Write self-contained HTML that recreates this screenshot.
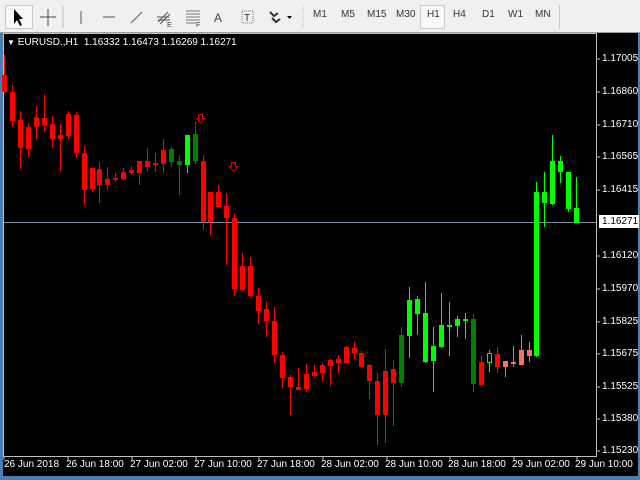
<!DOCTYPE html>
<html><head><meta charset="utf-8"><style>
body{margin:0;width:640px;height:480px;overflow:hidden;background:#000;font-family:"Liberation Sans",sans-serif;position:relative}
#tb{position:absolute;left:0;top:0;width:640px;height:33px;background:#f0f0f0;border-bottom:1px solid #a0a0a0;box-sizing:border-box}
.tf{position:absolute;top:9px;font-size:10px;color:#333}
.btn{position:absolute;top:5px;height:24px;border:1px solid #c8c8c8;box-sizing:border-box;background:#f8f8f8}
#lb{position:absolute;left:0;top:33px;width:3px;height:447px;background:#4a7fb0}
#bb{position:absolute;left:0;top:476px;width:640px;height:4px;background:#4a7fb0}
#rb{position:absolute;left:638px;top:33px;width:2px;height:447px;background:#4a7fb0}
.pl{position:absolute;left:602px;font-size:10px;color:#fff}
.dl{position:absolute;top:459px;font-size:10px;color:#fff;white-space:nowrap}
</style></head><body>
<div id="tb">
<div class="btn" style="left:5px;width:28px"></div>
<svg style="position:absolute;left:0;top:0" width="310" height="33">
<path d="M14 9 L14 24 L17 20 L20 26 L22 25 L19 19 L23 19 Z" fill="#000"/>
<path d="M48 9V26M40 17H56" stroke="#444" stroke-width="1"/>
<line x1="63" y1="6" x2="63" y2="28" stroke="#bbb"/>
<line x1="81" y1="11" x2="81" y2="24" stroke="#555"/>
<line x1="103" y1="17" x2="115" y2="17" stroke="#555"/>
<line x1="131" y1="23" x2="142" y2="12" stroke="#555"/>
<path d="M158 22l10-10M160 24l10-10M157 17h12M158 20h12" stroke="#555"/>
<text x="167" y="27" font-size="7" fill="#333" font-family="Liberation Sans">E</text>
<path d="M186 11h14M186 14h14M186 17h14M186 20h14M186 23h10" stroke="#777"/>
<text x="196" y="27" font-size="7" fill="#333" font-family="Liberation Sans">F</text>
<text x="214" y="22" font-size="12" fill="#444" font-family="Liberation Sans">A</text>
<rect x="242" y="11" width="11" height="12" fill="none" stroke="#777" stroke-dasharray="1,1"/>
<text x="244" y="21" font-size="10" fill="#333" font-family="Liberation Sans">T</text>
<path d="M270 12l4 4 4-3M272 18l4 4 4-3" stroke="#333" stroke-width="2" fill="none"/>
<path d="M287 16h5l-2.5 3z" fill="#000"/>
<line x1="303" y1="6" x2="303" y2="28" stroke="#bbb" stroke-dasharray="1,1"/>
</svg>
<div class="btn" style="left:420px;width:25px"></div>
<span class="tf" style="left:313px">M1</span><span class="tf" style="left:341px">M5</span><span class="tf" style="left:367px">M15</span><span class="tf" style="left:396px">M30</span><span class="tf" style="left:427px">H1</span><span class="tf" style="left:453px">H4</span><span class="tf" style="left:482px">D1</span><span class="tf" style="left:508px">W1</span><span class="tf" style="left:535px">MN</span>
<div style="position:absolute;left:559px;top:5px;width:1px;height:24px;background:#c8c8c8"></div>
</div>
<div id="lb"></div><div id="rb"></div><div id="bb"></div>
<svg id="ch" style="position:absolute;left:0;top:0" width="640" height="480"></svg>
<div style="position:absolute;left:7px;top:37px;font-size:10px;color:#fff;white-space:nowrap"><span style="font-size:8px">▼</span> EURUSD.,H1&nbsp; 1.16332 1.16473 1.16269 1.16271</div>
<div class="pl" style="top:53px">1.17005</div>
<div class="pl" style="top:86px">1.16860</div>
<div class="pl" style="top:119px">1.16710</div>
<div class="pl" style="top:151px">1.16565</div>
<div class="pl" style="top:184px">1.16415</div>
<div class="pl" style="top:215px;left:599px;background:#fff;color:#000;padding:1px 1px 1px 3px;z-index:2;white-space:nowrap">1.16271</div>
<div class="pl" style="top:250px">1.16120</div>
<div class="pl" style="top:283px">1.15970</div>
<div class="pl" style="top:316px">1.15825</div>
<div class="pl" style="top:348px">1.15675</div>
<div class="pl" style="top:381px">1.15525</div>
<div class="pl" style="top:413px">1.15380</div>
<div class="pl" style="top:445px">1.15230</div>
<div class="dl" style="left:4px">26 Jun 2018</div>
<div class="dl" style="left:66px">26 Jun 18:00</div>
<div class="dl" style="left:130px">27 Jun 02:00</div>
<div class="dl" style="left:194px">27 Jun 10:00</div>
<div class="dl" style="left:257px">27 Jun 18:00</div>
<div class="dl" style="left:321px">28 Jun 02:00</div>
<div class="dl" style="left:385px">28 Jun 10:00</div>
<div class="dl" style="left:448px">28 Jun 18:00</div>
<div class="dl" style="left:512px">29 Jun 02:00</div>
<div class="dl" style="left:575px">29 Jun 10:00</div>
<script>
var R='#ff0000',G='#00ff00',D='#008000',S='#fa7060',H='hollow';
var a=[[55,75,92,93,R],[85,92,121,127,R],[111,120,148,169,R],[124,127,149,158,R],[106,117,127,139,R],[94,118,125,132,R],[116,124,139,148,R],[124,135,139,171,R],[111,114,136,139,R],[112,115,153,158,R],[146,153,190,205,R],[168,168,189,192,R],[162,169,185,203,R],[167,179,185,190,R],[173,178,180,182,R],[168,172,179,180,R],[166,170,173,175,R],[161,161,173,185,R],[148,161,167,172,R],[153,163,165,172,R],[139,150,164,173,R],[147,149,162,167,D],[155,161,165,195,D],[135,135,165,173,G],[122,134,161,164,D],[155,161,222,230,R],[192,192,222,235,R],[185,192,207,207,R],[193,206,218,265,R],[214,218,289,296,R],[253,266,290,291,R],[257,266,296,297,R],[288,296,311,324,R],[302,309,321,337,R],[307,321,355,363,R]];
var xs=[];for(var i=0;i<a.length;i++)xs.push(4.3+7.93*i);
var b=[[282.3,352,355,378,388,R],[290.3,375,377,387,415,R],[298.3,368,387,390,390,R],[306.3,364,374,389,392,R],[313.7,365,372,376,377,R],[322,363,365,373,382,R],[329.7,359,360,366,386,R],[337.7,355,359,363,373,R],[345.7,346,347,363,363,R],[353.7,342,348,353,359,R],[361.3,351,353,367,367,R],[369.3,364,365,381,399,R],[377.3,373,381,415,445,R],[385.3,349,371,415,443,R],[393.3,360,369,383,426,R],[401.3,327,335,383,387,D],[409.3,287,300,336,358,G],[417,296,299,314,335,G],[425,282,313,362,363,G],[433,327,346,361,392,G],[441,293,325,347,348,G],[449,302,325,327,356,G],[457,316,319,326,337,G],[465,313,319,321,339,G],[472.7,314,319,384,392,D],[480.7,356,362,385,385,R],[488.7,350,353,363,372,H],[496.7,347,354,367,373,R],[504.7,361,361,367,377,S],[512.7,346,362,364,367,S],[520.7,335,350,365,365,S],[528.7,342,350,356,362,S],[536.3,182,192,356,357,G],[544.3,172,192,203,227,G],[552.3,135,161,204,205,G],[560.3,156,161,172,183,G],[568,172,172,209,212,G],[576,177,208,223,223,G]];
var s='';
s+='<rect x="3.5" y="33.5" width="593" height="423" fill="none" stroke="#c0c0c0"/>';
s+='<line x1="4" y1="222.5" x2="596" y2="222.5" stroke="#8090a0"/>';
function c(x,h,o,cl,l,col){
 var stroke=col==H?'#00ff00':col;
 s+='<line x1="'+(x+0.5)+'" y1="'+h+'" x2="'+(x+0.5)+'" y2="'+l+'" stroke="'+stroke+'"/>';
 var hh=Math.max(cl-o,1);
 if(col==H)s+='<rect x="'+(x-1.5)+'" y="'+(o+0.5)+'" width="4" height="'+(hh-1)+'" fill="#000" stroke="#00ff00"/>';
 else s+='<rect x="'+(x-2)+'" y="'+o+'" width="5" height="'+hh+'" fill="'+col+'"/>';
}
for(var i=0;i<a.length;i++)c(Math.round(xs[i]),a[i][0],a[i][1],a[i][2],a[i][3],a[i][4]);
for(var i=0;i<b.length;i++)c(Math.round(b[i][0]),b[i][1],b[i][2],b[i][3],b[i][4],b[i][5]);
s+='<path d="M198.5 114.5h4v4h2l-4 5-4-5h2z" fill="none" stroke="#e00000"/>';
s+='<path d="M231.5 162.5h4v4h2l-4 5-4-5h2z" fill="none" stroke="#e00000"/>';
var ys=[59,92,125,157,190,256,289,322,354,387,419,451];
ys.forEach(function(y){s+='<line x1="596" y1="'+y+'" x2="600" y2="'+y+'" stroke="#c0c0c0"/>';});
[4,68,132,196,259,323,387,450,514,577].forEach(function(x){s+='<line x1="'+x+'" y1="456" x2="'+x+'" y2="460" stroke="#c0c0c0"/>';});
document.getElementById('ch').innerHTML=s;
</script>
</body></html>
